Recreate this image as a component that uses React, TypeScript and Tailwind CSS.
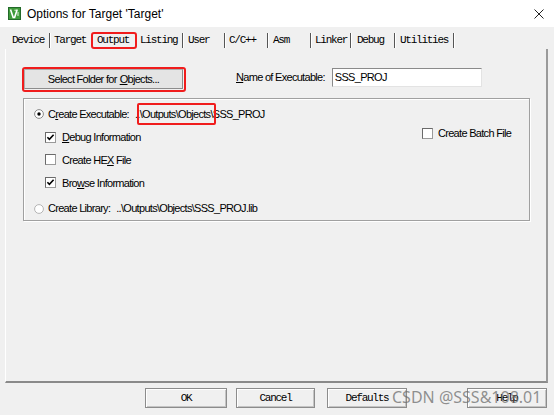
import React from "react";

const sans = "font-['Liberation_Sans',Arial,sans-serif] text-[11px] tracking-[-0.7px] text-black";
const mono = "font-['Liberation_Mono',monospace] text-[11px] tracking-[-1.25px] text-black leading-none whitespace-nowrap";

function Sep() {
  return (
    <div className="flex h-[15px] self-center">
      <div className="w-[1px] h-full bg-[#555555]" />
      <div className="w-[1px] h-full bg-white" />
    </div>
  );
}

function Tab({ label, w, pl }: { label: string; w: string; pl: string }) {
  return (
    <div className={`${w} ${pl} flex items-center ${mono}`}>{label}</div>
  );
}

function Check({ checked }: { checked?: boolean }) {
  return (
    <div className="w-[11px] h-[11px] bg-white border border-t-[#6a6a6a] border-l-[#6a6a6a] border-b-[#9a9a9a] border-r-[#9a9a9a] flex items-center justify-center shrink-0">
      {checked && (
        <svg width="9" height="9" viewBox="0 0 9 9">
          <path d="M1.4 4.3 L3.4 6.4 L7.6 1.8" fill="none" stroke="#000" strokeWidth="1.6" />
        </svg>
      )}
    </div>
  );
}

function Radio({ selected }: { selected?: boolean }) {
  return (
    <svg width="10" height="10" viewBox="0 0 10 10" className="shrink-0">
      <circle cx="5" cy="5" r="4.4" fill="#fff" stroke={selected ? "#8a8a8a" : "#b4b4b4"} strokeWidth="1" />
      {selected && <circle cx="5" cy="5" r="1.7" fill="#000" />}
    </svg>
  );
}

function DlgButton({ label, w }: { label: string; w: string }) {
  return (
    <div
      className={`${w} h-[20px] bg-[#f0f0f0] border border-[#8c8c8c] shadow-[inset_1px_1px_0_#ffffff,inset_-1px_-1px_0_#c4c4c4] flex items-center justify-center ${mono}`}
    >
      {label}
    </div>
  );
}

export default function App() {
  return (
    <div className="relative w-[554px] h-[415px] bg-[#f0f0f0] overflow-hidden flex flex-col">
      {/* Title bar */}
      <div className="h-[27px] bg-white flex items-center shrink-0">
        <svg width="13" height="13" viewBox="0 0 13 13" className="ml-[8px]">
          <rect x="0.5" y="0.5" width="12" height="12" fill="#3f9b3a" stroke="#23692a" />
          <path d="M2.5 2.5 L5.2 10.5 L6.6 10.5 L9.2 2.5" fill="none" stroke="#fff" strokeWidth="1.6" />
          <path d="M6.4 3.2 L8 3.2 M10 5 L10 9" stroke="#e8f5e0" strokeWidth="1" />
        </svg>
        <span className="ml-[6px] font-['Liberation_Sans',Arial,sans-serif] text-[12px] text-black leading-none">
          Options for Target 'Target'
        </span>
        <svg width="10" height="10" viewBox="0 0 10 10" className="ml-auto mr-[10px]">
          <path d="M0.5 0.5 L9.5 9.5 M9.5 0.5 L0.5 9.5" stroke="#222" strokeWidth="1" />
        </svg>
      </div>

      {/* Tabs */}
      <div className="mt-[5px] h-[17px] flex items-stretch shrink-0">
        <Tab label="Device" w="w-[37px]" pl="ml-[12px]" />
        <Sep />
        <Tab label="Target" w="w-[40px]" pl="pl-[3px]" />
        <div className={`w-[46px] h-[17px] border-2 border-[#f01c1c] rounded-[3px] pl-[4px] flex items-center ${mono}`}>
          Output
        </div>
        <Tab label="Listing" w="w-[45px]" pl="pl-[3px]" />
        <Sep />
        <Tab label="User" w="w-[40px]" pl="pl-[4px]" />
        <Sep />
        <Tab label="C/C++" w="w-[41px]" pl="pl-[3px]" />
        <Sep />
        <Tab label="Asm" w="w-[41px]" pl="pl-[4px]" />
        <Sep />
        <Tab label="Linker" w="w-[38px]" pl="pl-[3px]" />
        <Sep />
        <Tab label="Debug" w="w-[42px]" pl="pl-[5px]" />
        <Sep />
        <Tab label="Utilities" w="w-[57px]" pl="pl-[4px]" />
        <Sep />
      </div>

      {/* Panel */}
      <div className="ml-[5px] w-[543px] h-[334px] shrink-0 border-l border-l-white border-r-2 border-r-[#9a9a9a] border-b-2 border-b-[#8a8a8a] flex flex-col">
        {/* Row 1 */}
        <div className={`mt-[18px] ml-[16px] flex items-start ${sans}`}>
          <div className="w-[164px] h-[25px] border-2 border-[#f01c1c] rounded-[3px] flex items-start">
            <div className="w-[159px] h-[20px] bg-[#e4e4e4] border border-[#adadad] border-b-[#8c8c8c] border-r-[#8c8c8c] flex items-center justify-center">
              Select Folder for <span className="underline ml-[3px]">O</span>bjects...
            </div>
          </div>
          <div className="ml-[50px] mt-[1px] h-[19px] flex items-center">
            <span className="underline">N</span>ame of Executable:
          </div>
          <div className="ml-[7px] mt-[1px] w-[150px] h-[19px] bg-white border border-t-[#8a8a8a] border-l-[#8a8a8a] border-b-[#e3e3e3] border-r-[#e3e3e3] flex items-center pl-[2px]">
            SSS_PROJ
          </div>
        </div>

        {/* Group box */}
        <div className={`mt-[6px] ml-[17px] w-[507px] h-[123px] border border-[#a0a0a0] shadow-[inset_1px_1px_0_#ffffff,1px_1px_0_#ffffff] flex ${sans}`}>
          <div className="flex-1 flex flex-col pt-[4px] pl-[10px]">
            <div className="h-[23px] flex items-center">
              <Radio selected />
              <span className="ml-[4px]">
                C<span className="underline">r</span>eate Executable:
              </span>
              <span className="ml-[6px]">..</span>
              <span className="relative">
                \Outputs\Objects\
                <span className="absolute left-[-3px] right-[-3px] top-1/2 -translate-y-1/2 h-[22px] border-2 border-[#f01c1c] rounded-[2px]" />
              </span>
              <span>SSS_PROJ</span>
            </div>
            <div className="h-[23px] flex items-center pl-[11px]">
              <Check checked />
              <span className="ml-[6px]">
                <span className="underline">D</span>ebug Information
              </span>
            </div>
            <div className="h-[23px] flex items-center pl-[11px]">
              <Check />
              <span className="ml-[6px]">
                Create HE<span className="underline">X</span> File
              </span>
            </div>
            <div className="h-[23px] flex items-center pl-[11px]">
              <Check checked />
              <span className="ml-[6px]">
                Bro<span className="underline">w</span>se Information
              </span>
            </div>
            <div className="mt-[3px] h-[23px] flex items-center">
              <Radio />
              <span className="ml-[4px]">Create Library:</span>
              <span className="ml-[6px]">..\Outputs\Objects\SSS_PROJ.lib</span>
            </div>
          </div>
          <div className="w-[107px] pt-[23px]">
            <div className="h-[23px] flex items-center">
              <Check />
              <span className="ml-[5px]">Create Batch File</span>
            </div>
          </div>
        </div>
      </div>

      {/* Bottom buttons */}
      <div className="mt-[5px] h-[20px] flex shrink-0">
        <div className="ml-[145px]">
          <DlgButton label="OK" w="w-[82px]" />
        </div>
        <div className="ml-[9px]">
          <DlgButton label="Cancel" w="w-[79px]" />
        </div>
        <div className="ml-[12px]">
          <DlgButton label="Defaults" w="w-[80px]" />
        </div>
        <div className="ml-[60px]">
          <DlgButton label="Help" w="w-[80px]" />
        </div>
      </div>

      {/* Watermark */}
      <div className="absolute left-[392px] top-[386px] font-['Noto_Sans',sans-serif] text-[16px] leading-[22px] text-[rgba(110,110,110,0.75)] whitespace-nowrap">
        CSDN @SSS&amp;108.01
      </div>
    </div>
  );
}
